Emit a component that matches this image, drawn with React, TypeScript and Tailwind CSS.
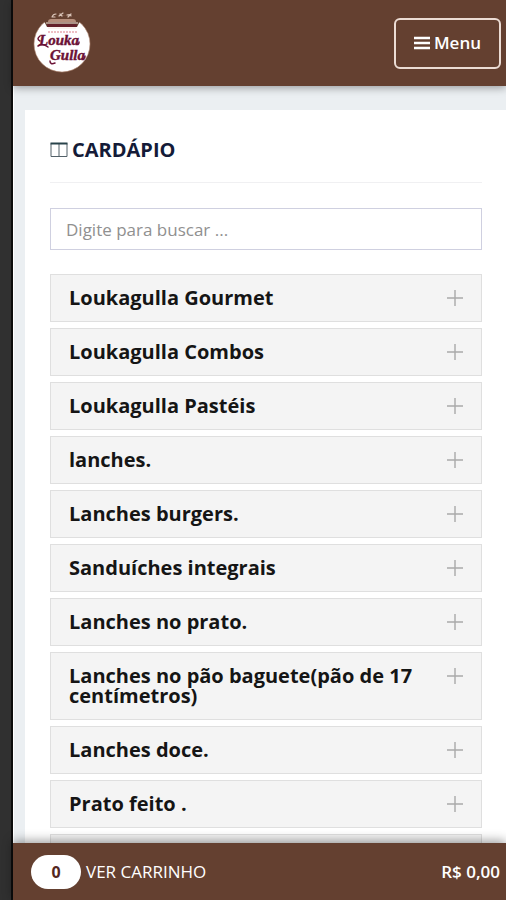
const categories = [
  "Loukagulla Gourmet",
  "Loukagulla Combos",
  "Loukagulla Pastéis",
  "lanches.",
  "Lanches burgers.",
  "Sanduíches integrais",
  "Lanches no prato.",
  "Lanches no pão baguete(pão de 17 centímetros)",
  "Lanches doce.",
  "Prato feito .",
];

function Logo() {
  return (
    <svg viewBox="0 0 60 64" className="h-16 w-15" role="img" aria-label="Louka Gulla">
      <circle cx="30" cy="33" r="28" fill="#fff" stroke="#b58d78" strokeWidth="0.6" />
      <path d="M12 5h36v5l-3 6H15l-3-6z" fill="#644030" />
      <path d="M16 11q0-3 3-3h22q3 0 3 3z" fill="#b58e7c" />
      <rect x="15" y="13" width="30" height="3" rx="1.5" fill="#63202a" />
      <path d="M14 12h32M16 17h28" stroke="#f2e4dc" strokeWidth="1" fill="none" />
      <path
        d="M20 6q1-3 4-3M21 6l2 0M27 5l4-3M28 3l2 2M35 4q4-1 4 1M36 6l3-3"
        stroke="#d9c3b7"
        strokeWidth="1.2"
        strokeLinecap="round"
        fill="none"
      />
      <path d="M16 21h29" stroke="#eebfc4" strokeWidth="2" strokeDasharray="2 1" />
      <g
        fill="#6b1236"
        stroke="#6b1236"
        strokeWidth="0.4"
        fontFamily="'Liberation Serif', serif"
        fontWeight="700"
        fontStyle="italic"
      >
        <text x="7" y="34" fontSize="15">Louka</text>
        <text x="18" y="49" fontSize="15">Gulla</text>
      </g>
      <path
        d="M8 25q-4 3 0 5M6 35q5-3 10 1M18 50q0 4 5 2M45 33q2 1 2-2M50 48q3 0 3-3"
        stroke="#6b1236"
        strokeWidth="1.5"
        fill="none"
        strokeLinecap="round"
      />
    </svg>
  );
}

function Plus() {
  return (
    <svg viewBox="0 0 16 16" className="mt-0.5 size-4 shrink-0" aria-hidden="true">
      <path d="M8 0v16M0 8h16" stroke="#a9a9a9" strokeWidth="1.4" />
    </svg>
  );
}

export default function App() {
  return (
    <div className="flex h-screen overflow-hidden bg-[#303030] font-['Open_Sans',sans-serif]">
      <div className="w-[13px] shrink-0 border-r-2 border-[#0c0c0c] bg-[#303030]" />
      <div className="flex min-w-0 flex-1 flex-col border-l border-white bg-[#ebeff2]">
        <header className="z-10 -ml-px flex h-[86px] shrink-0 items-center justify-between bg-[#644030] pr-[5px] pl-[19px] shadow-[0_2px_8px_rgba(0,0,0,0.35)]">
          <a href="#inicio">
            <Logo />
          </a>
          <button className="flex h-[51px] items-center gap-1 rounded-md border-2 border-[#ecdcd4] px-[18px] text-[17px] font-semibold text-white">
            <svg viewBox="0 0 16 16" className="size-4" aria-hidden="true">
              <path d="M0 3h16M0 8h16M0 13h16" stroke="#fff" strokeWidth="2.6" />
            </svg>
            Menu
          </button>
        </header>

        <main className="min-h-0 flex-1 overflow-hidden pt-6 pl-[11px]">
          <section className="bg-white px-6 pt-6 pl-[25px]">
            <h1 className="flex h-[49px] items-start gap-1 border-b border-[#f0f0f2] text-xl leading-8 font-bold text-[#141b38]">
              <svg viewBox="0 0 18 16" className="mt-2 h-4 w-[18px]" aria-hidden="true">
                <path d="M1 1.5v13h16v-13M9 1v14" fill="none" stroke="#536169" strokeWidth="1" />
                <path d="M0.5 1.5h17" stroke="#28434a" strokeWidth="2" />
              </svg>
              CARDÁPIO
            </h1>
            <input
              type="text"
              aria-label="Buscar no cardápio"
              placeholder="Digite para buscar ..."
              className="mt-[25px] block h-[42px] w-full border border-[#cfd0e0] bg-white px-[15px] text-[17px] text-[#555] outline-none placeholder:text-[#909090]"
            />
            <div className="mt-6 flex flex-col gap-1.5">
              {categories.map((name) => (
                <button
                  key={name}
                  aria-expanded="false"
                  className="flex w-full items-start justify-between gap-6 border border-[#dfdfdf] bg-[#f4f4f4] px-[18px] py-[13px] text-left text-xl leading-5 font-bold text-[#151515]"
                >
                  <span>{name}</span>
                  <Plus />
                </button>
              ))}
              <div className="h-12 border border-[#dfdfdf] bg-[#f4f4f4]" />
            </div>
          </section>
        </main>

        <footer className="z-10 -ml-px flex h-[57px] shrink-0 items-center justify-between bg-[#644030] pr-1.5 pl-[18px] text-[17px] text-white shadow-[0_-2px_10px_rgba(0,0,0,0.4)]">
          <button className="flex items-center gap-[5px]">
            <span className="flex h-[34px] w-[50px] items-center justify-center rounded-full bg-white text-base font-bold text-[#54281f]">
              0
            </span>
            VER CARRINHO
          </button>
          <span className="font-semibold">R$ 0,00</span>
        </footer>
      </div>
    </div>
  );
}
